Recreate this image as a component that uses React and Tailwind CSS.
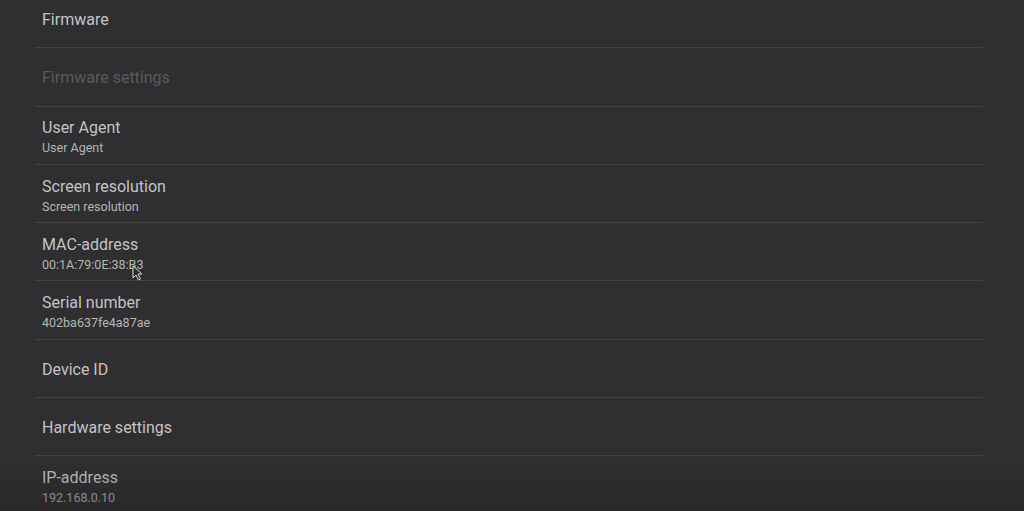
import React from "react";

const rows = [
  { title: "Firmware" },
  { title: "Firmware settings", disabled: true },
  { title: "User Agent", subtitle: "User Agent" },
  { title: "Screen resolution", subtitle: "Screen resolution" },
  { title: "MAC-address", subtitle: "00:1A:79:0E:38:B3" },
  { title: "Serial number", subtitle: "402ba637fe4a87ae" },
  { title: "Device ID" },
  { title: "Hardware settings" },
  { title: "IP-address", subtitle: "192.168.0.10" },
];

function Row({ title, subtitle, disabled }) {
  return (
    <div className="h-[58.3px] border-b border-[#434245] flex flex-col justify-center px-[7px] pt-[3px]">
      <div
        className={`text-[16px] leading-[20px] ${
          disabled ? "text-[#5b5a5d]" : "text-[#c4c4c4]"
        }`}
      >
        {title}
      </div>
      {subtitle && (
        <div className="text-[12.5px] leading-[15px] mt-[2px] text-[#b6b6b6]">
          {subtitle}
        </div>
      )}
    </div>
  );
}

function Cursor() {
  return (
    <svg
      className="absolute left-[132px] top-[265px]"
      width="11"
      height="16"
      viewBox="0 0 11 16"
    >
      <path
        d="M1 1 L1 13 L4 10 L6.5 15 L8.5 14 L6 9 L10 9 Z"
        fill="#2a2a2a"
        stroke="#d8d8d8"
        strokeWidth="1"
        strokeLinejoin="round"
      />
    </svg>
  );
}

export default function App() {
  return (
    <div
      className="relative w-[1024px] h-[511px] overflow-hidden bg-[#2f2e31]"
      style={{ fontFamily: "Roboto, 'Noto Sans', sans-serif" }}
    >
      <div className="pl-[35px] pr-[41px] -mt-[10px]">
        {rows.map((r) => (
          <Row key={r.title} {...r} />
        ))}
      </div>
      <div className="absolute inset-x-0 bottom-0 h-[50px] bg-gradient-to-b from-transparent to-[#1f1e21]/40 pointer-events-none" />
      <Cursor />
    </div>
  );
}
